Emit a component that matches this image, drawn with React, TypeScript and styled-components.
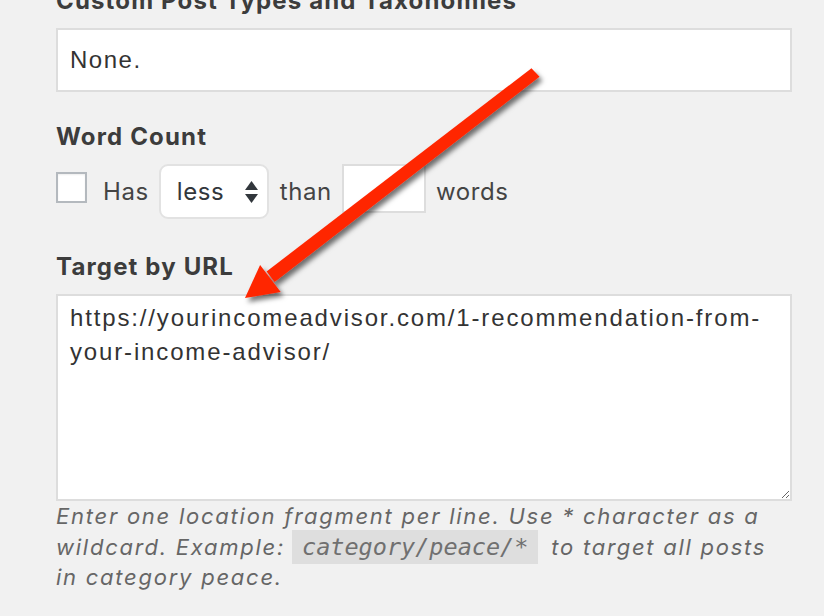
import React from 'react'
import styled, { createGlobalStyle } from 'styled-components'

const GlobalStyle = createGlobalStyle`
  html, body {
    margin: 0;
    padding: 0;
    background: #f1f1f1;
  }
  body {
    font-family: Inter, "Noto Sans", sans-serif;
    color: #444;
  }
`

const Page = styled.div`
  position: relative;
  width: 824px;
  height: 616px;
  overflow: hidden;
`

const Panel = styled.div`
  width: 736px;
  margin-left: 56px;
  margin-top: -14px;
`

const SectionTitle = styled.div<{ $top?: number }>`
  font-family: Inter, "Noto Sans", sans-serif;
  font-weight: 700;
  font-size: 24px;
  letter-spacing: 1.15px;
  line-height: 30px;
  color: #3c3c3c;
  margin-top: ${p => p.$top ?? 0}px;
  margin-bottom: 12px;
`

const ReadBox = styled.div`
  box-sizing: border-box;
  height: 64px;
  background: #fff;
  border: 2px solid #dddddd;
  padding: 0 12px;
  display: flex;
  align-items: center;
  font-family: "Liberation Sans", Arial, sans-serif;
  font-size: 24px;
  letter-spacing: 1.5px;
  color: #333;
`

const CountRow = styled.div`
  display: flex;
  align-items: flex-start;
  height: 55px;
  font-size: 24px;
  letter-spacing: 0.6px;
  color: #444;
`

const Check = styled.span`
  box-sizing: border-box;
  width: 31px;
  height: 31px;
  margin-top: 8px;
  border: 2px solid #b4b9be;
  background: #fff;
  box-shadow: inset 0 1px 2px rgba(0, 0, 0, 0.07);
  margin-right: 16px;
`

const Word = styled.span<{ $gap?: number }>`
  line-height: 55px;
  margin-right: ${p => p.$gap ?? 10}px;
`

const Select = styled.div`
  box-sizing: border-box;
  width: 110px;
  height: 55px;
  border: 2px solid #e2e2e2;
  border-radius: 9px;
  background: #fff;
  display: flex;
  align-items: center;
  justify-content: space-between;
  padding: 0 8px 0 16px;
  margin-right: 11px;
  line-height: 51px;
  color: #32373c;
`

const NumberBox = styled.div`
  box-sizing: border-box;
  width: 84px;
  height: 49px;
  border: 2px solid #dddddd;
  background: #fff;
  margin-right: 10px;
`

const UrlArea = styled.textarea`
  display: block;
  box-sizing: border-box;
  width: 736px;
  height: 207px;
  margin: 0;
  border: 2px solid #dddddd;
  background: #fff;
  padding: 5px 12px;
  font-family: "Liberation Sans", Arial, sans-serif;
  font-size: 24px;
  letter-spacing: 1.85px;
  line-height: 34px;
  color: #333;
  resize: vertical;
  outline: none;
`

const Help = styled.p`
  margin: 0;
  max-width: 722px;
  font-family: Inter, "Noto Sans", sans-serif;
  font-style: italic;
  font-size: 22px;
  letter-spacing: 1.75px;
  line-height: 30.5px;
  color: #666;
`

const Code = styled.code`
  font-family: "DejaVu Sans Mono", monospace;
  font-style: italic;
  font-size: 23.5px;
  letter-spacing: 0;
  background: #dedede;
  padding: 3px 10px;
  margin: 0 5px 0 7px;
  color: #707070;
`

function Updown() {
  return (
    <svg width="15" height="26" viewBox="0 0 15 26">
      <path d="M7.5 2 L14 11 L1 11 Z" fill="#32373c" />
      <path d="M1 15 L14 15 L7.5 24 Z" fill="#32373c" />
    </svg>
  )
}

const ArrowLayer = styled.svg`
  position: absolute;
  left: 0;
  top: 0;
  pointer-events: none;
`

function Arrow() {
  return (
    <ArrowLayer viewBox="0 0 824 616" width="824" height="616">
      <defs>
        <filter id="sh" x="-20%" y="-20%" width="140%" height="140%">
          <feDropShadow dx="3" dy="4" stdDeviation="2.5" floodColor="#000" floodOpacity="0.55" />
        </filter>
      </defs>
      <g filter="url(#sh)" fill="#ff2600">
        <polygon points="531.5,68.2 539.5,76.8 274.6,282.1 266.6,271.5" />
        <polygon points="245,298 260.1,265 280.7,292" />
      </g>
    </ArrowLayer>
  )
}

export default function App() {
  return (
    <>
      <GlobalStyle />
      <Page>
        <Panel>
          <SectionTitle>Custom Post Types and Taxonomies</SectionTitle>
          <ReadBox>None.</ReadBox>
          <SectionTitle $top={30}>Word Count</SectionTitle>
          <CountRow>
            <Check />
            <Word $gap={10}>Has</Word>
            <Select>
              <span>less</span>
              <Updown />
            </Select>
            <Word $gap={10}>than</Word>
            <NumberBox />
            <Word>words</Word>
          </CountRow>
          <SectionTitle $top={33}>Target by URL</SectionTitle>
          <UrlArea
            readOnly
            defaultValue="https://yourincomeadvisor.com/1-recommendation-from-your-income-advisor/"
          />
          <Help>
            Enter one location fragment per line. Use * character as a wildcard. Example:
            <Code>category/peace/*</Code> to target all posts in category peace.
          </Help>
        </Panel>
        <Arrow />
      </Page>
    </>
  )
}
